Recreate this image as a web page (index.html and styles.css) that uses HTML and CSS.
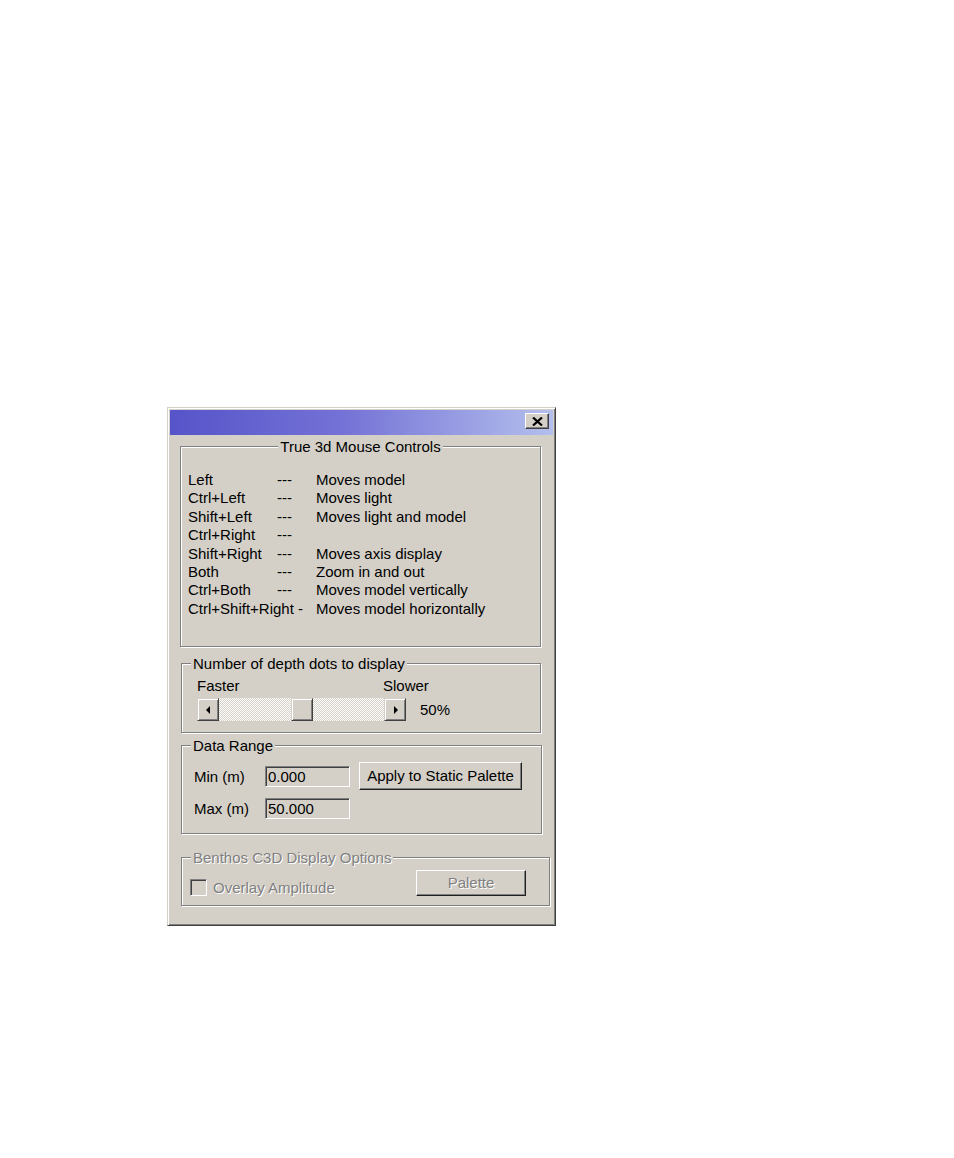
FILE: index.html
```html
<!DOCTYPE html>
<html>
<head>
<meta charset="utf-8">
<title>True 3d Mouse Controls</title>
<link rel="stylesheet" href="styles.css">
</head>
<body>
<div class="dialog">
  <div class="titlebar">
    <div class="close" title="Close">
      <svg width="11" height="9" viewBox="0 0 11 9"><path d="M1 0.5 L10 8.5 M10 0.5 L1 8.5" stroke="#000" stroke-width="2.2" fill="none"/></svg>
    </div>
  </div>

  <div class="group g1">
    <div class="legend centered">True 3d Mouse Controls</div>
    <div class="controls">
      <span>Left</span><span>---</span><span>Moves model</span>
      <span>Ctrl+Left</span><span>---</span><span>Moves light</span>
      <span>Shift+Left</span><span>---</span><span>Moves light and model</span>
      <span>Ctrl+Right</span><span>---</span><span></span>
      <span>Shift+Right</span><span>---</span><span>Moves axis display</span>
      <span>Both</span><span>---</span><span>Zoom in and out</span>
      <span>Ctrl+Both</span><span>---</span><span>Moves model vertically</span>
      <span>Ctrl+Shift+Right -</span><span></span><span>Moves model horizontally</span>
    </div>
  </div>

  <div class="group g2">
    <div class="legend">Number of depth dots to display</div>
    <div class="g2-body">
      <div class="speed"><span>Faster</span><span>Slower</span></div>
      <div class="sbrow">
        <div class="scrollbar">
          <div class="raised sb-btn"><span class="arrow-left"></span></div>
          <div class="track">
            <div class="spacer"></div>
            <div class="raised thumb"></div>
            <div class="spacer"></div>
          </div>
          <div class="raised sb-btn"><span class="arrow-right"></span></div>
        </div>
        <span class="pct">50%</span>
      </div>
    </div>
  </div>

  <div class="group g3">
    <div class="legend">Data Range</div>
    <div class="g3-body">
      <div class="dr-row first">
        <span class="dr-label">Min (m)</span>
        <div class="field">0.000</div>
        <div class="button apply">Apply to Static Palette</div>
      </div>
      <div class="dr-row second">
        <span class="dr-label">Max (m)</span>
        <div class="field">50.000</div>
      </div>
    </div>
  </div>

  <div class="group g4">
    <div class="legend disabled">Benthos C3D Display Options</div>
    <div class="g4-body">
      <div class="check-wrap">
        <div class="checkbox"></div>
        <span class="disabled check-label">Overlay Amplitude</span>
      </div>
      <div class="button palette"><span class="disabled">Palette</span></div>
    </div>
  </div>
</div>
</body>
</html>
```

FILE: styles.css
```css
* {
  box-sizing: border-box;
}

body {
  margin: 0;
  background: #ffffff;
  font-family: "Liberation Sans", Arial, sans-serif;
  font-size: 15px;
  color: #000;
}

.dialog {
  margin: 407px 0 0 167px;
  width: 389px;
  height: 519px;
  background: #d4d0c8;
  border: 1px solid;
  border-color: #d4d0c8 #404040 #404040 #d4d0c8;
  box-shadow: inset 1px 1px 0 #ffffff, inset -1px -1px 0 #808080;
  padding: 2px;
}

.titlebar {
  height: 25px;
  background: linear-gradient(90deg, #5654c9 0%, #7472d6 45%, #b4bfed 100%);
  display: flex;
  justify-content: flex-end;
  align-items: flex-start;
  padding: 3px 4px 0 0;
}

.close {
  width: 24px;
  height: 16px;
  background: #d4d0c8;
  border: 1px solid;
  border-color: #ffffff #404040 #404040 #ffffff;
  box-shadow: inset -1px -1px 0 #808080;
  display: flex;
  align-items: center;
  justify-content: center;
}

.close svg {
  display: block;
}

/* etched group boxes */
.group {
  border: 1px solid #808080;
  box-shadow: 1px 1px 0 #ffffff, inset 1px 1px 0 #ffffff;
  margin-left: 11px;
  width: 361px;
}

.legend {
  width: fit-content;
  margin: -8px 0 0 9px;
  padding: 0 2px;
  line-height: 16px;
  background: #d4d0c8;
  white-space: nowrap;
}

.legend.centered {
  margin-left: auto;
  margin-right: auto;
}

.disabled {
  color: #808080;
  text-shadow: 1px 1px 0 #ffffff;
}

/* group 1 */
.g1 {
  margin-top: 11px;
  margin-left: 10px;
  width: 361px;
}

.g1 .legend {
  margin-bottom: 16px;
}

.controls {
  display: grid;
  grid-template-columns: 89px 39px 1fr;
  line-height: 18.38px;
  padding: 0 7px 28px 7px;
  white-space: nowrap;
}

/* group 2 */
.g2 {
  margin-top: 16px;
  width: 360px;
}

.g2 .legend {
  margin-bottom: 6px;
}

.g2-body {
  padding: 0 0 11px 15px;
}

.speed {
  display: grid;
  grid-template-columns: 186px auto;
  line-height: 16px;
}

.sbrow {
  display: flex;
  align-items: center;
  margin-top: 4px;
}

.scrollbar {
  display: flex;
  width: 209px;
  height: 23px;
}

.raised {
  background: #d4d0c8;
  border: 1px solid;
  border-color: #d4d0c8 #404040 #404040 #d4d0c8;
  box-shadow: inset 1px 1px 0 #ffffff, inset -1px -1px 0 #808080;
}

.sb-btn {
  width: 22px;
  height: 23px;
  display: flex;
  align-items: center;
  justify-content: center;
  flex: none;
}

.arrow-left {
  width: 0;
  height: 0;
  border-top: 4px solid transparent;
  border-bottom: 4px solid transparent;
  border-right: 4px solid #000;
  margin-right: 1px;
}

.arrow-right {
  width: 0;
  height: 0;
  border-top: 4px solid transparent;
  border-bottom: 4px solid transparent;
  border-left: 4px solid #000;
  margin-left: 1px;
}

.track {
  flex: 1;
  display: flex;
  background: repeating-conic-gradient(#ffffff 0 25%, #d4d0c8 0 50%) 0 0 / 2px 2px;
}

.spacer {
  flex: 1;
}

.thumb {
  width: 22px;
  height: 23px;
  flex: none;
}

.pct {
  margin-left: 14px;
  line-height: 16px;
}

/* group 3 */
.g3 {
  margin-top: 12px;
  width: 361px;
}

.g3 .legend {
  margin-bottom: 8px;
}

.g3-body {
  padding: 0 0 14px 12px;
}

.dr-row {
  display: flex;
  align-items: center;
}

.dr-row.first {
  height: 28px;
}

.dr-row.second {
  margin-top: 8px;
  height: 21px;
}

.dr-label {
  width: 71px;
  white-space: nowrap;
}

.field {
  width: 85px;
  height: 21px;
  line-height: 19px;
  padding: 0 2px;
  background: #d4d0c8;
  border: 1px solid;
  border-color: #808080 #ffffff #ffffff #808080;
  box-shadow: inset 1px 1px 0 #404040, inset -1px -1px 0 #d4d0c8;
}

.button {
  background: #d4d0c8;
  border: 1px solid;
  border-color: #ffffff #202020 #202020 #ffffff;
  box-shadow: inset -1px -1px 0 #808080;
  text-align: center;
  white-space: nowrap;
}

.apply {
  width: 163px;
  height: 28px;
  line-height: 26px;
  margin-left: 9px;
}

/* group 4 */
.g4 {
  margin-top: 23px;
  width: 369px;
}

.g4 .legend {
  margin-bottom: 4px;
}

.g4-body {
  display: flex;
  align-items: flex-end;
  padding: 0 23px 9px 8px;
}

.check-wrap {
  display: flex;
  align-items: center;
}

.checkbox {
  width: 17px;
  height: 17px;
  background: #d4d0c8;
  border: 1px solid;
  border-color: #808080 #ffffff #ffffff #808080;
  box-shadow: inset 1px 1px 0 #404040, inset -1px -1px 0 #d4d0c8;
}

.check-label {
  margin-left: 6px;
  line-height: 17px;
  white-space: nowrap;
}

.palette {
  margin-left: auto;
  width: 110px;
  height: 26px;
  line-height: 24px;
}
```
